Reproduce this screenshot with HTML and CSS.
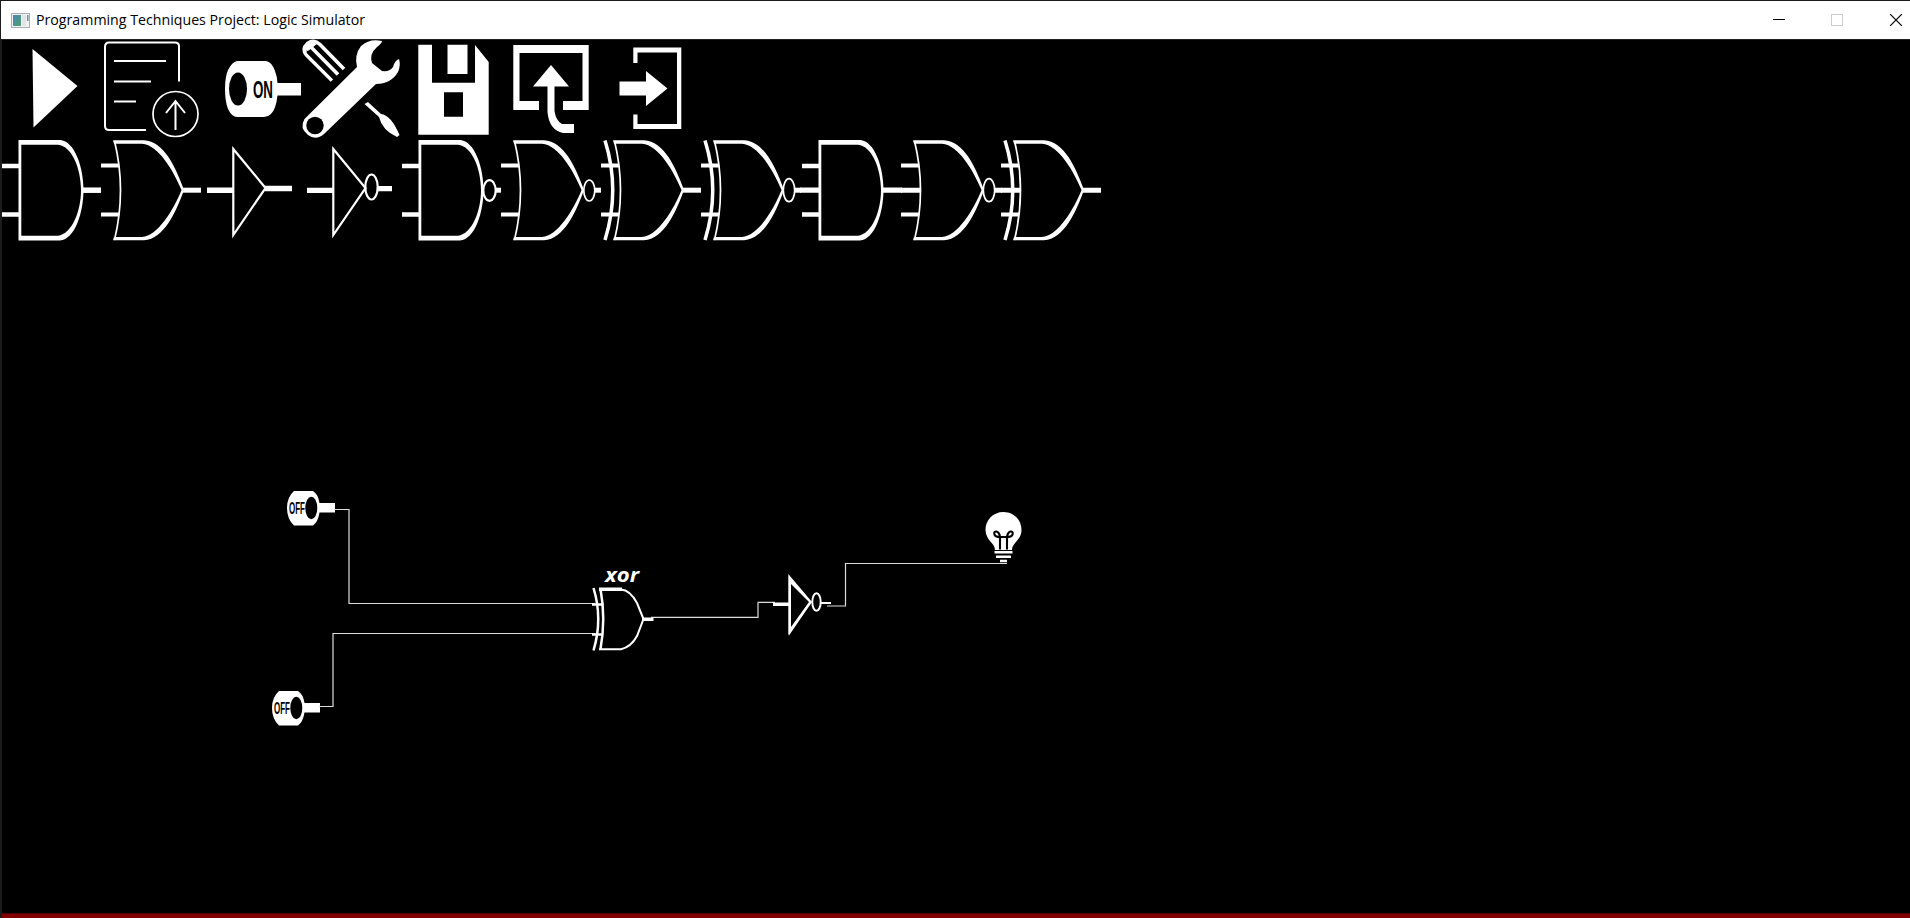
FILE: index.html
```html
<!DOCTYPE html>
<html lang="en">
<head>
<meta charset="utf-8">
<title>Programming Techniques Project: Logic Simulator</title>
<link rel="stylesheet" href="styles.css">
</head>
<body>
<div class="window">
  <header class="titlebar">
    <svg class="app-icon" width="19" height="15" viewBox="0 0 19 15">
      <defs><linearGradient id="g" x1="0" y1="0" x2="1" y2="1"><stop offset="0" stop-color="#4a86b8"/><stop offset="1" stop-color="#4fa06c"/></linearGradient></defs>
      <rect x=".5" y=".5" width="18" height="14" fill="#f3f3f3" stroke="#a9adb1"/>
      <rect x="2" y="2" width="8" height="11" fill="url(#g)"/>
      <rect x="11" y="2" width="4" height="11" fill="#e2e5e8"/>
      <rect x="16" y="2" width="1.5" height="6" fill="#5b97a8"/>
    </svg>
    <svg class="title" width="360" height="30"><text x="0" y="20" textLength="329" lengthAdjust="spacingAndGlyphs">Programming Techniques Project: Logic Simulator</text></svg>
    <div class="controls">
      <svg width="12" height="12" viewBox="0 0 12 12"><path d="M0 5.500H12" stroke="#000"/></svg>
      <svg width="12" height="12" viewBox="0 0 12 12"><rect x=".5" y=".5" width="11" height="11" fill="none" stroke="#ccc"/></svg>
      <svg width="12" height="12" viewBox="0 0 12 12"><path d="M0 0L12 12M12 0L0 12" stroke="#000" stroke-width="1.200"/></svg>
    </div>
  </header>
  <main class="workspace">
    <nav class="toolbar">
      <svg class="tool" viewBox="2 40 100 100"><path class="solid" d="M32.500 49L77.500 86L33.500 127.500Z"/></svg>
      <svg class="tool" viewBox="102 40 100 100">
        <path class="line" stroke-width="2" d="M179 81.500V46Q179 42.500 175 42.500H109Q105 42.500 105 47V126Q105 130 109 130H146M114 61H166M114 81.500H151M114 101.500H136"/>
        <circle class="line" stroke-width="1.700" cx="175.500" cy="114" r="22.500"/>
        <path class="line" stroke-width="2" d="M175.500 130V101M166 113L175.500 101L185 113"/>
      </svg>
      <svg class="tool" viewBox="202 40 100 100">
        <path class="solid" d="M237 61H266Q272 62 275 71Q277 76 277.500 83H301V95.500H277.500Q276 109 271 114Q268 117 264 117H237Q232 117 228 109Q225 101 225 89Q225 77 228 70Q232 62 237 61Z"/>
        <ellipse cx="238" cy="89" rx="9" ry="16.500"/>
        <text class="switch-on" x="253" y="98" textLength="20" lengthAdjust="spacingAndGlyphs">ON</text>
      </svg>
      <svg class="tool" viewBox="302 40 100 100">
        <path class="solid" d="M304.500 119L357 67Q354 55 361 46Q370 38 382 41Q382 43 377 47Q369 54 372 63L382 71Q390 72 393 67Q395 60 399 59Q401 65 398 72Q391 84 376 84L324 134Q316 141 308 135Q299 128 304.500 119Z"/>
        <circle cx="315" cy="125.500" r="8.700"/>
        <path class="line" stroke-width="3.600" d="M332 80.500L306.500 55Q301.500 49 307.500 43.500Q314 39 320 44.500L344 69M309 45L338 74.500"/>
        <path class="solid" d="M304 50Q304 42 312 42L317 44L308 51Z"/>
        <path class="line" stroke="#000" stroke-width="3" d="M307.500 51.500L334 78M315 46L341 72"/>
        <path class="solid" d="M364.500 104L368 102L381 114Q391 115 399.500 135L397 137Q382 130 379 117Z"/>
      </svg>
      <svg class="tool" viewBox="402 40 100 100">
        <path class="solid" fill-rule="evenodd" d="M418.300 44.700H432V82.700H475V45L488.700 62V134.700H418.300ZM447.500 44.700H467.500V74H447.500ZM444 92.300V116.700H463V92.300Z"/>
      </svg>
      <svg class="tool" viewBox="502 40 100 100">
        <path class="solid" d="M513.300 45H588.700V110H563V101H582.500V53H519.500V101H539V110H513.300Z"/>
        <path class="solid" d="M551 65L569 86.500H554.500V111Q556 121 562 124H574V133H563Q549 130 547.500 112V86.500H533Z"/>
      </svg>
      <svg class="tool" viewBox="602 40 100 100">
        <path class="solid" d="M633.300 47.500H681.300V129H633.300V114.500H637.500V124H677V52.500H637.500V63H633.300Z"/>
        <path class="solid" d="M619.500 81.500H646V71L667.500 88.500L646 106V95.500H619.500Z"/>
      </svg>
    </nav>
    <svg class="symbols" aria-hidden="true">
      <defs>
        <g id="and">
          <path class="solid" fill-rule="evenodd" d="M18.500 140H60C75 141 83.500 168 83.500 190C83.500 212 75 239.500 60 240.500H18.500ZM21.300 144.700V235.700H58C72 234 81 211 81 190C81 169 72 146 58 144.700Z"/>
          <path class="line" stroke-width="4.500" d="M2 166H19M2 214.500H19"/>
        </g>
        <g id="or">
          <path class="line" stroke-width="1.700" d="M114.500 141Q126.500 190 114.500 240"/>
          <path class="solid" fill-rule="evenodd" d="M113 140.300H144C164 141 176 168 184 190C176 212 164 239 144 240.300H113L114 237H142C158 236 174 209 181.500 190C174 172 159 145 142 143.700H114Z"/>
          <path class="line" stroke-width="4" d="M101 165.500H119M101 214.500H119"/>
        </g>
        <path id="xbar" class="line" stroke-width="3.500" d="M105 140.500Q120.500 190 105 240"/>
        <path id="tri" class="line" stroke-width="2.200" d="M233.300 149L265.500 188L233.300 235Z"/>
      </defs>
    </svg>
    <nav class="toolbar gates">
      <svg class="tool" viewBox="2 140 100 100"><use href="#and"/><path class="line" stroke-width="5.500" d="M83 190.200H101"/></svg>
      <svg class="tool" viewBox="102 140 100 100"><use href="#or"/><path class="line" stroke-width="5" d="M183 190.200H201"/></svg>
      <svg class="tool" viewBox="202 140 100 100"><use href="#tri"/><path class="line" stroke-width="5.500" d="M207 190.300H233M265 188.500H292"/></svg>
      <svg class="tool" viewBox="202 140 100 100"><use href="#tri"/><path class="line" stroke-width="5.200" d="M207 190.300H233M278 188.700H292"/><ellipse class="line" stroke-width="2.200" cx="271.500" cy="187" rx="6.200" ry="12.500"/></svg>
      <svg class="tool" viewBox="2 140 100 100"><use href="#and"/><path class="line" stroke-width="5" d="M96 190.200H101"/><ellipse class="line" stroke-width="2.200" cx="89.500" cy="190.500" rx="6.200" ry="10.300"/></svg>
      <svg class="tool" viewBox="102 140 100 100"><use href="#or"/><path class="line" stroke-width="5" d="M195 190.200H201"/><ellipse class="line" stroke-width="1.700" cx="189.300" cy="190.500" rx="5.500" ry="10.500"/></svg>
      <svg class="tool" viewBox="102 140 100 100"><use href="#or"/><use href="#xbar"/><path class="line" stroke-width="5" d="M183 190.200H201"/></svg>
      <svg class="tool" viewBox="102 140 100 100"><use href="#or"/><use href="#xbar"/><path class="line" stroke-width="5" d="M195 190.200H201"/><ellipse class="line" stroke-width="1.700" cx="189" cy="190.200" rx="5.700" ry="11.500"/></svg>
      <svg class="tool" viewBox="2 140 100 100"><use href="#and"/><path class="line" stroke-width="5.300" d="M0 190.200H19M83 190.200H102"/></svg>
      <svg class="tool" viewBox="102 140 100 100"><use href="#or"/><path class="line" stroke-width="5" d="M101 190.200H121M195 190.200H202"/><ellipse class="line" stroke-width="1.700" cx="189" cy="190.200" rx="5.700" ry="11.500"/></svg>
      <svg class="tool" viewBox="102 140 100 100"><use href="#or"/><use href="#xbar"/><path class="line" stroke-width="5" d="M101 190.200H121M183 190.200H201"/></svg>
    </nav>
    <svg class="canvas" viewBox="2 240 1908 673">
      <defs>
        <g id="switch">
          <path class="solid" d="M294 491H313Q318 494 319.500 503H335V512.500H319.500Q318 522 313 525.500H294Q287 519 287 508Q287 497 294 491Z"/>
          <ellipse cx="311.300" cy="508" rx="6" ry="11.200"/>
          <text class="switch-off" x="289" y="513.500" textLength="16" lengthAdjust="spacingAndGlyphs">OFF</text>
        </g>
      </defs>
      <use href="#switch"/>
      <use href="#switch" x="-15" y="200"/>
      <path class="wire" d="M334 509.500H349V603.500H595M319 706.500H333V633.500H595M651 617.300H758V602.300H775M827 606H845.500V563.500H1007"/>
      <text class="label" x="605" y="581.500" textLength="34" lengthAdjust="spacingAndGlyphs">xor</text>
      <path class="line" stroke-width="2.500" d="M593.500 588Q603 619 593.500 650.500M600.500 589Q606 619 600.500 649M592 604.500H602M592 634.500H602"/>
      <path class="line" stroke-width="2" d="M599 649.200H621Q631 647 637 636L643.500 619L637 603Q630 590 621 589.500"/>
      <path class="line" stroke-width="3.500" d="M599 589.300H622M642 619.300H653.500M773 604.300H790"/>
      <path class="solid" fill-rule="evenodd" d="M788.300 574L812 602L789 635.500L788.300 634ZM791 584V627L809 602Z"/>
      <ellipse class="line" stroke-width="1.900" cx="816.500" cy="602" rx="4.200" ry="8.800"/>
      <path class="line" stroke-width="2" d="M820 603H831"/>
      <path class="solid" d="M1003.500 512C1014 512 1021.500 520 1021.500 530C1021.500 540 1012 543 1012 550H995C995 543 985.500 540 985.500 530C985.500 520 993 512 1003.500 512Z"/>
      <path fill="none" stroke="#000" stroke-width="2.100" d="M1000 549.500V537C999 530 993.500 530.500 994.300 534C995 538 1000 537 1003.500 537S1012 538 1012.700 534C1013.500 530.500 1008 530 1007 537V549.500"/>
      <path class="line" stroke-width="2.400" d="M994.500 552.300H1012.500M996 556.700H1011M1000 561H1007"/>
    </svg>
    <footer class="statusbar"></footer>
  </main>
</div>
</body>
</html>
```
FILE: styles.css
```css
* { box-sizing: border-box; }
body { margin: 0; background: #000; overflow: hidden; font-family: "Open Sans", "Noto Sans", sans-serif; }
.window { height: 918px; display: flex; flex-direction: column; border-top: 1px solid #1a1a1a; border-left: 1px solid #1c1c1c; }
.titlebar { height: 39px; flex: none; display: flex; align-items: center; background: #fff; border-bottom: 1px solid #222; padding: 0 8px 0 10px; }
.title { margin-left: 6px; margin-bottom: 1px; font-size: 15.3px; overflow: visible; }
.controls { display: flex; gap: 47px; margin-left: auto; }
.controls svg:first-child { margin-right: -1px; }
.workspace { flex: 1; min-height: 0; display: flex; flex-direction: column; border-left: 1px solid #1c1c1c; background: #000; }
.toolbar { display: flex; flex: none; height: 100px; }
.tool { width: 100px; height: 100px; flex: none; overflow: visible; }
.symbols { width: 0; height: 0; flex: none; }
.solid { fill: #fff; }
.line { fill: none; stroke: #fff; }
.line[stroke="#000"] { stroke: #000; }
.canvas { flex: none; width: 1908px; height: 673px; }
.wire { fill: none; stroke: #ddd; stroke-width: 1.2; }
.switch-on { font: bold 24px "Liberation Sans", sans-serif; }
.switch-off { font: bold 16px "Liberation Sans", sans-serif; }
.label { fill: #fff; font: italic bold 20px "Open Sans", sans-serif; }
.statusbar { flex: 1; background: #800000; border-top: 1px solid #500000; }
```
